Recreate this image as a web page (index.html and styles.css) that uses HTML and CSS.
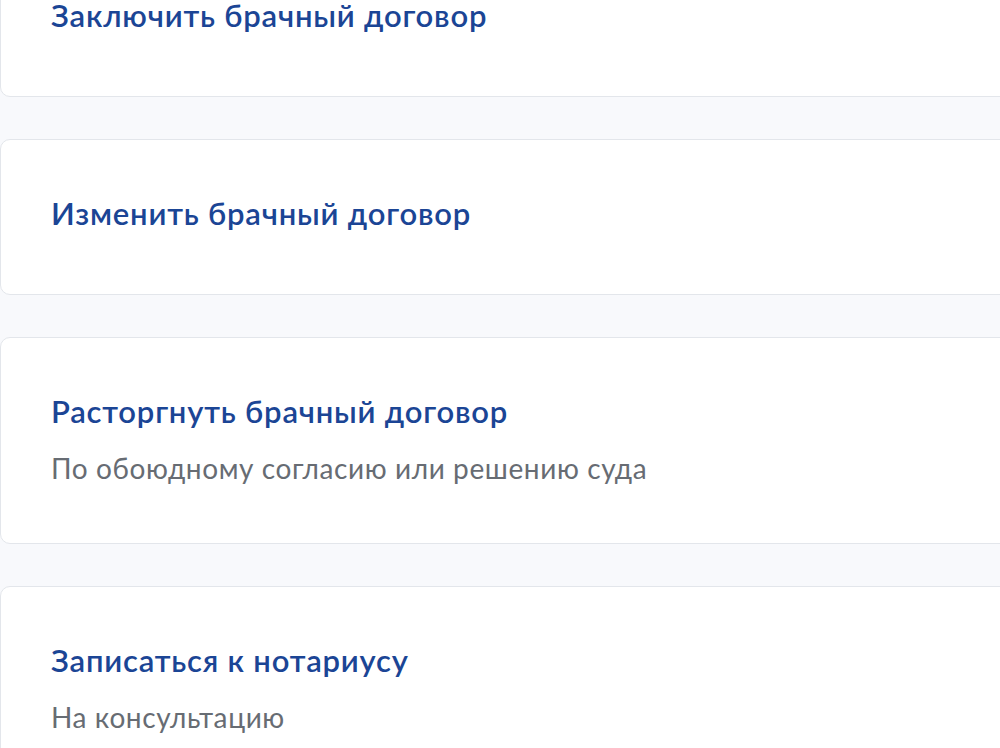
FILE: index.html
```html
<!DOCTYPE html>
<html lang="ru">
<head>
<meta charset="utf-8">
<title>Брачный договор</title>
<link rel="stylesheet" href="styles.css">
</head>
<body>
<main class="list">
  <a class="card" href="#">
    <span class="card-title">Заключить брачный договор</span>
  </a>
  <a class="card" href="#">
    <span class="card-title">Изменить брачный договор</span>
  </a>
  <a class="card" href="#">
    <span class="card-title">Расторгнуть брачный договор</span>
    <span class="card-sub">По обоюдному согласию или решению суда</span>
  </a>
  <a class="card" href="#">
    <span class="card-title">Записаться к нотариусу</span>
    <span class="card-sub">На консультацию</span>
  </a>
</main>
</body>
</html>
```

FILE: styles.css
```css
html, body {
  margin: 0;
  padding: 0;
  height: 100%;
  overflow: hidden;
}

body {
  background: #f8f9fc;
  font-family: Lato, "Noto Sans", "Liberation Sans", sans-serif;
}

.list {
  display: flex;
  flex-direction: column;
  gap: 42px;
  margin-top: -59px;
}

.card {
  display: flex;
  flex-direction: column;
  box-sizing: border-box;
  min-height: 156px;
  margin-right: -20px;
  padding: 53px 50px 57px;
  background: #ffffff;
  border: 1px solid #e3e6eb;
  border-radius: 10px;
  text-decoration: none;
}

.card-title {
  font-size: 31px;
  line-height: 40px;
  letter-spacing: 0.8px;
  font-weight: 600;
  color: #1b4595;
}

.card-sub {
  margin-top: 20px;
  font-size: 28px;
  line-height: 35px;
  letter-spacing: 0.6px;
  font-weight: 400;
  color: #676c73;
}
```
